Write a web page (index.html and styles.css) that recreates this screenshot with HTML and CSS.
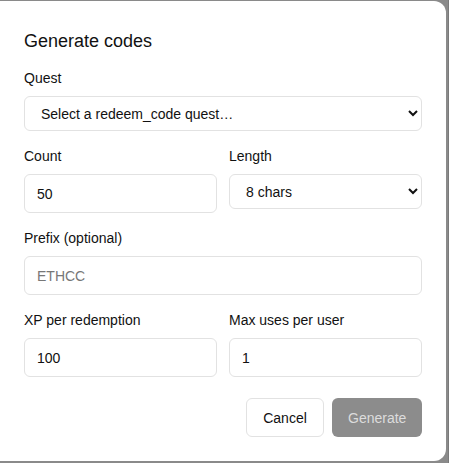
FILE: index.html
```html
<!DOCTYPE html>
<html>
<head>
<meta charset="utf-8">
<link rel="stylesheet" href="styles.css">
</head>
<body>
<div class="backdrop">
  <div class="modal">
    <h2 class="title">Generate codes</h2>
    <div class="field">
      <label class="label">Quest</label>
      <select class="control select"><option>Select a redeem_code quest…</option></select>
    </div>
    <div class="row">
      <div class="field">
        <label class="label">Count</label>
        <input class="control input" value="50">
      </div>
      <div class="field">
        <label class="label">Length</label>
        <select class="control select"><option>8 chars</option></select>
      </div>
    </div>
    <div class="field">
      <label class="label">Prefix (optional)</label>
      <input class="control input" placeholder="ETHCC">
    </div>
    <div class="row">
      <div class="field">
        <label class="label">XP per redemption</label>
        <input class="control input" value="100">
      </div>
      <div class="field">
        <label class="label">Max uses per user</label>
        <input class="control input" value="1">
      </div>
    </div>
    <div class="actions">
      <button class="btn btn-cancel">Cancel</button>
      <button class="btn btn-primary" disabled>Generate</button>
    </div>
  </div>
</div>
</body>
</html>
```
FILE: styles.css
```css
* { box-sizing: border-box; }
html, body { margin: 0; padding: 0; }
body {
  background: #8a8a8a;
  font-family: "Liberation Sans", Arial, sans-serif;
  color: #111;
  width: 449px;
  height: 463px;
  overflow: hidden;
}
.backdrop {
  padding-top: 1px;
  width: 449px;
  height: 463px;
  border-right: 1px solid #7a7a7a;
}
.modal {
  width: 446px;
  height: 460px;
  background: #fff;
  border-radius: 0 12px 12px 0;
  padding: 26px 24px 24px 24px;
  display: flex;
  flex-direction: column;
  gap: 15px;
}
.title {
  margin: 0 0 -2px 0;
  font-size: 18px;
  font-weight: 400;
  line-height: 28px;
}
.field {
  display: flex;
  flex-direction: column;
  gap: 8px;
  min-width: 0;
}
.label {
  font-size: 14px;
  line-height: 20px;
}
.row {
  display: grid;
  grid-template-columns: 1fr 1fr;
  gap: 12px;
  align-items: start;
}
.control {
  font-family: "Liberation Sans", Arial, sans-serif;
  font-size: 14px;
  color: #111;
  background: #fff;
  border: 1px solid #e2e2e2;
  border-radius: 6px;
  width: 100%;
  margin: 0;
}
.input {
  height: 39px;
  padding: 0 12px;
  outline: none;
}
.input::placeholder { color: #777; }
.select {
  height: 35px;
  padding: 0 8px 0 12px;
}
.actions {
  display: flex;
  justify-content: flex-end;
  gap: 8px;
  margin-top: 6px;
}
.btn {
  font-family: "Liberation Sans", Arial, sans-serif;
  font-size: 14px;
  height: 39px;
  border-radius: 6px;
  padding: 0 16px;
}
.btn-cancel {
  width: 78px;
  background: #fff;
  color: #111;
  border: 1px solid #e2e2e2;
}
.btn-primary {
  width: 90px;
  background: #8c8c8c;
  color: #dcdcdc;
  border: none;
}
```
